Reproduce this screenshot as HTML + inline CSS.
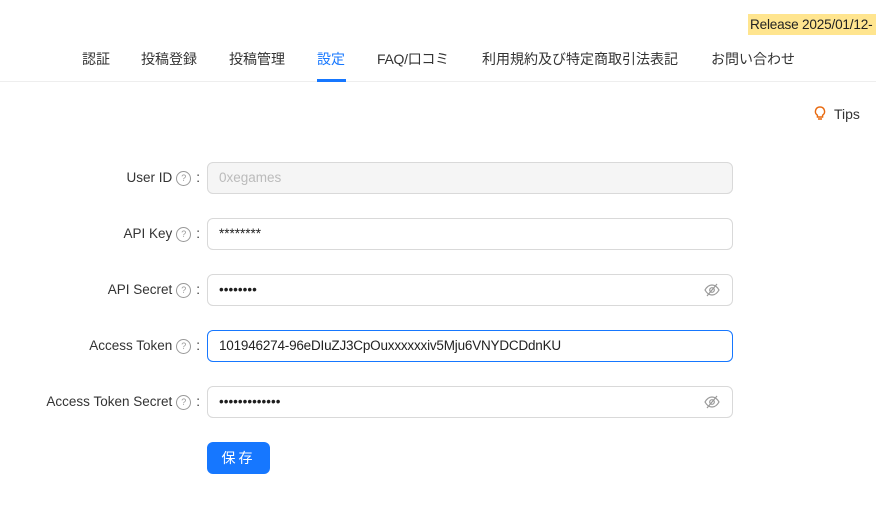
<!DOCTYPE html>
<html><head><meta charset="utf-8"><style>
body{margin:0;width:883px;height:522px;background:#fff;font-family:"Liberation Sans","Noto Sans CJK JP",sans-serif;font-size:14px;color:rgba(0,0,0,.88);position:relative;overflow:hidden}
.rel{position:absolute;left:748px;top:14px;height:21px;line-height:21px;background:#ffe58f;padding:0 0 0 2px;width:126px;white-space:nowrap;overflow:hidden;font-size:13.6px;color:#222;letter-spacing:-0.2px}
.nav{position:absolute;top:0;left:0;width:876px;height:81px;border-bottom:1px solid #eee}
.nav span{position:absolute;top:49px;font-size:14px;color:#333}
.nav .act{color:#1677ff}
.ul{position:absolute;left:317px;top:79px;width:29px;height:3px;background:#1677ff}
.tips{position:absolute;left:814px;top:106px;font-size:14px;color:#333}
.lab{position:absolute;right:683px;top:0;height:32px;font-size:13.5px;color:#333;white-space:nowrap;line-height:32px;display:flex;align-items:center}
.q{display:inline-block;width:13px;height:13px;border:1px solid #999;border-radius:50%;font-size:9px;line-height:13px;text-align:center;color:#999;margin:0 5px 0 4px}
.inp{position:absolute;left:207px;height:30px;border:1px solid #d9d9d9;border-radius:6px;line-height:30px;padding-left:11px;box-sizing:content-box;width:513px;font-size:13.5px}
.dis{background:#f5f5f5;color:#bbb}
.foc{border-color:#1677ff}
.eye{position:absolute;right:12px;top:8px}
.btn{position:absolute;left:207px;top:442px;width:63px;height:32px;background:#1677ff;border-radius:6px;color:#fff;text-align:center;line-height:32px;font-size:14px;letter-spacing:3px}
</style></head><body>
<div class="rel">Release 2025/01/12-</div>
<div class="nav">
<span style="left:82px">認証</span>
<span style="left:141px">投稿登録</span>
<span style="left:229px">投稿管理</span>
<span class="act" style="left:317px">設定</span>
<span style="left:377px;letter-spacing:-0.3px">FAQ/口コミ</span>
<span style="left:482px">利用規約及び特定商取引法表記</span>
<span style="left:711px">お問い合わせ</span>
</div>
<div class="ul"></div>
<div class="tips"><svg width="12" height="15" viewBox="0 0 12 15" style="vertical-align:-2px;margin-right:8px"><path d="M6 1a4.5 4.5 0 0 0-2.6 8.2V11h5.2V9.2A4.5 4.5 0 0 0 6 1zM4 13h4" fill="none" stroke="#e8690f" stroke-width="1.4"/></svg>Tips</div>

<div class="lab" style="top:162px">User ID<span class="q">?</span>:</div>
<div class="inp dis" style="top:162px">0xegames</div>
<div class="lab" style="top:218px">API Key<span class="q">?</span>:</div>
<div class="inp" style="top:218px">********</div>
<div class="lab" style="top:274px">API Secret<span class="q">?</span>:</div>
<div class="inp" style="top:274px">••••••••<svg class="eye" width="16" height="14" viewBox="0 0 16 14"><path d="M1 7c2-3.5 4.5-5 7-5s5 1.5 7 5c-2 3.5-4.5 5-7 5S3 10.5 1 7zM3 13L13 1" fill="none" stroke="#999" stroke-width="1.2"/><circle cx="8" cy="7" r="2.3" fill="none" stroke="#999" stroke-width="1.2"/></svg></div>
<div class="lab" style="top:330px">Access Token<span class="q">?</span>:</div>
<div class="inp foc" style="top:330px;color:#222;letter-spacing:-0.2px">101946274-96eDIuZJ3CpOuxxxxxxiv5Mju6VNYDCDdnKU</div>
<div class="lab" style="top:386px">Access Token Secret<span class="q">?</span>:</div>
<div class="inp" style="top:386px">•••••••••••••<svg class="eye" width="16" height="14" viewBox="0 0 16 14"><path d="M1 7c2-3.5 4.5-5 7-5s5 1.5 7 5c-2 3.5-4.5 5-7 5S3 10.5 1 7zM3 13L13 1" fill="none" stroke="#999" stroke-width="1.2"/><circle cx="8" cy="7" r="2.3" fill="none" stroke="#999" stroke-width="1.2"/></svg></div>
<div class="btn">保存</div>
</body></html>
